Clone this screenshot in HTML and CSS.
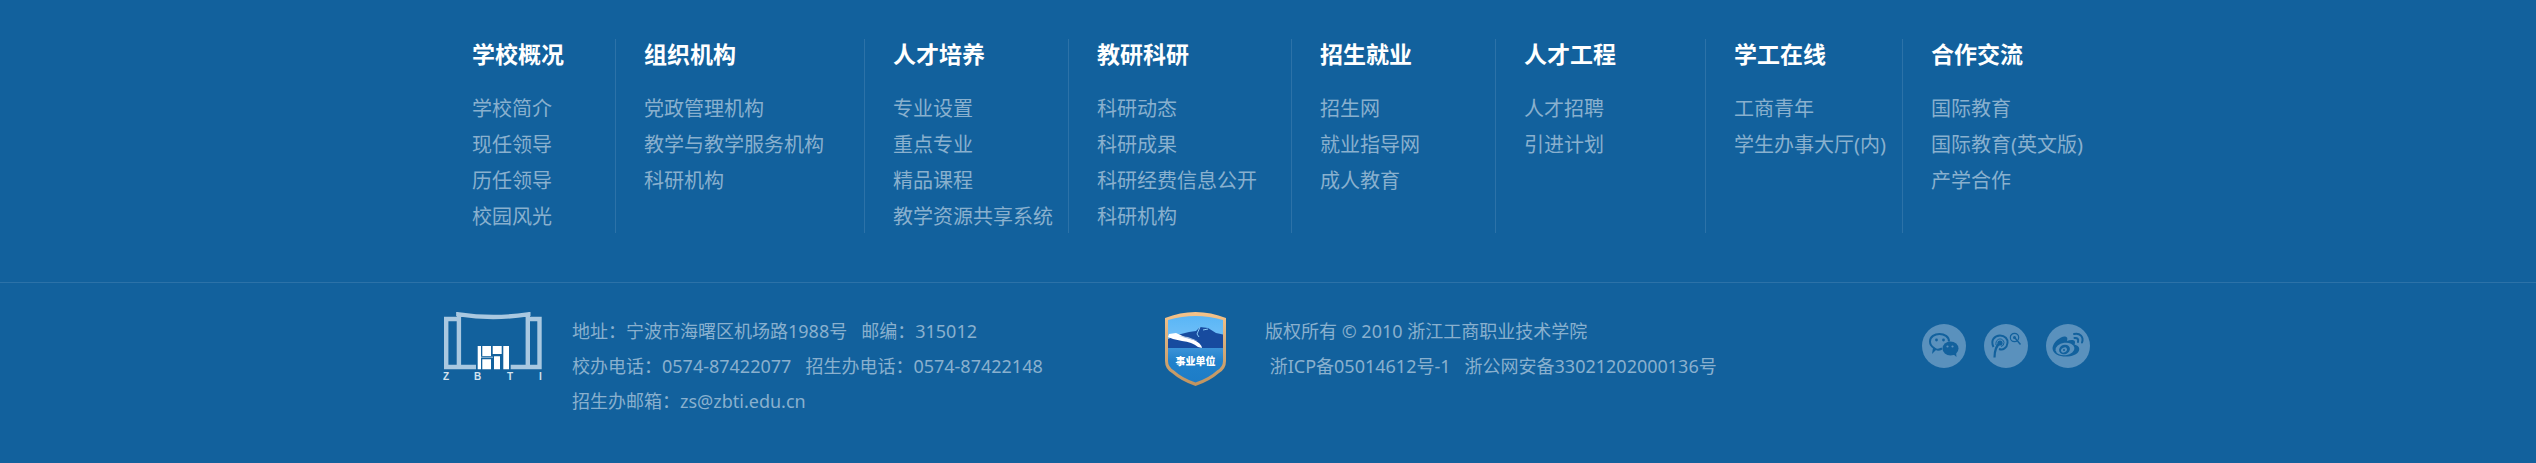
FILE: index.html
```html
<!DOCTYPE html>
<html lang="zh-CN">
<head>
<meta charset="utf-8">
<meta name="viewport" content="width=device-width, initial-scale=1">
<title>浙江工商职业技术学院</title>
<link rel="stylesheet" href="styles.css">
</head>
<body>
<footer class="footer">
  <nav class="sitemap container" aria-label="网站导航">
    <section class="col">
      <h2>学校概况</h2>
      <ul><li><a href="#">学校简介</a></li><li><a href="#">现任领导</a></li><li><a href="#">历任领导</a></li><li><a href="#">校园风光</a></li></ul>
    </section>
    <section class="col">
      <h2>组织机构</h2>
      <ul><li><a href="#">党政管理机构</a></li><li><a href="#">教学与教学服务机构</a></li><li><a href="#">科研机构</a></li></ul>
    </section>
    <section class="col">
      <h2>人才培养</h2>
      <ul><li><a href="#">专业设置</a></li><li><a href="#">重点专业</a></li><li><a href="#">精品课程</a></li><li><a href="#">教学资源共享系统</a></li></ul>
    </section>
    <section class="col">
      <h2>教研科研</h2>
      <ul><li><a href="#">科研动态</a></li><li><a href="#">科研成果</a></li><li><a href="#">科研经费信息公开</a></li><li><a href="#">科研机构</a></li></ul>
    </section>
    <section class="col">
      <h2>招生就业</h2>
      <ul><li><a href="#">招生网</a></li><li><a href="#">就业指导网</a></li><li><a href="#">成人教育</a></li></ul>
    </section>
    <section class="col">
      <h2>人才工程</h2>
      <ul><li><a href="#">人才招聘</a></li><li><a href="#">引进计划</a></li></ul>
    </section>
    <section class="col">
      <h2>学工在线</h2>
      <ul><li><a href="#">工商青年</a></li><li><a href="#">学生办事大厅(内)</a></li></ul>
    </section>
    <section class="col">
      <h2>合作交流</h2>
      <ul><li><a href="#">国际教育</a></li><li><a href="#">国际教育(英文版)</a></li><li><a href="#">产学合作</a></li></ul>
    </section>
  </nav>

  <div class="bottom">
    <div class="bottom-row container">
      <div class="contact">
        <svg class="logo" viewBox="0 0 99 69" role="img" aria-label="ZBTI">
          <g fill="none" stroke="#a9c8e0" stroke-width="4.4">
            <path d="M14 7H3.2V55H33"/>
            <path d="M15.9 55V2.4Q50 7.6 84.8 2.4V55"/>
            <path d="M87 7H96.500V55H67.700"/>
            <path d="M13.700 0V4M87 0V4" stroke-width="1"/>
          </g>
          <g fill="#fff">
            <path d="M34.700 34H38V57.300H34.700zM39.300 34H48V44H39.300zM39.300 47.300H48V57.300H39.300zM49.700 34H58.700V42H49.700zM51 44.300H57V57.300H51zM60.300 34H66V57.300H60.300z"/>
            <path d="M38 45.200H50" stroke="#a9c8e0"/>
          </g>
          <g class="logo-letters"><text x="0" y="68">Z</text><text x="31" y="68">B</text><text x="64" y="68">T</text><text x="96" y="68">I</text></g>
        </svg>
        <address class="info">
          <p>地址：宁波市海曙区机场路1988号 &nbsp; 邮编：315012</p>
          <p>校办电话：0574-87422077 &nbsp; 招生办电话：0574-87422148</p>
          <p>招生办邮箱：zs@zbti.edu.cn</p>
        </address>
      </div>
      <div class="legal">
        <svg class="badge" viewBox="0 0 61 74" role="img" aria-label="事业单位">
          <defs>
            <linearGradient id="sky" x2="0" y2="1"><stop offset="0" stop-color="#55b4f6"/><stop offset="1" stop-color="#7cc4f8"/></linearGradient>
            <linearGradient id="sea" x2="0" y2="1"><stop offset="0" stop-color="#3b93d8"/><stop offset=".35" stop-color="#2081cb"/><stop offset="1" stop-color="#1c7bc6"/></linearGradient>
            <linearGradient id="rim" x2="0" y2="1"><stop offset="0" stop-color="#f5c389"/><stop offset=".4" stop-color="#d9af7c"/><stop offset="1" stop-color="#c0935f"/></linearGradient>
          </defs>
          <path fill="url(#rim)" d="M0 6Q15 0 30.500 0Q46 0 61 6V49Q61 57 54 61Q45 69 30.500 74Q16 69 7 61Q0 57 0 49z"/>
          <clipPath id="shield"><path d="M3 8Q17 4 30.500 4Q44 4 58 8V49Q58 55 52 58.500Q44 66 30.500 70.500Q17 66 9 58.500Q3 55 3 49z"/></clipPath>
          <g clip-path="url(#shield)">
            <path fill="url(#sky)" d="M0 0H61V38H0z"/>
            <path fill="#174b9f" d="M0 28L16 22L24 20L31 19L35 15L43 16L51 21L61 23V37H0z"/>
            <path fill="none" stroke="#8ccbf7" d="M35 15L32 22L34 25M38 18L43 17"/>
            <path fill="#fff" d="M4 22L11 21L20 25L29 28Q36 31 37 36L33 35Q27 30 17 29L8 27L3 25z"/>
            <path fill="#a7bfe0" d="M14 24L23 25L33 29L28 28z"/>
            <path fill="url(#sea)" d="M0 36H61V74H0z"/>
          </g>
          <text class="badge-text" x="30.500" y="53" text-anchor="middle">事业单位</text>
        </svg>
        <div class="info">
          <p>版权所有 © 2010 浙江工商职业技术学院</p>
          <p>&nbsp;<a href="#">浙ICP备05014612号-1</a> &nbsp; <a href="#">浙公网安备33021202000136号</a></p>
        </div>
      </div>
      <div class="social">
        <a href="#" aria-label="微信">
          <svg viewBox="0 0 44 44">
            <path fill="none" stroke="#12619d" stroke-width="2" d="M20 24.500Q16 26.500 13.500 25L11.500 27L12 24Q8 21.500 8 17.500C8 7.500 27 7.500 27 17.500"/>
            <ellipse cx="28.500" cy="24.500" rx="8" ry="7" fill="#12619d"/><path fill="#12619d" d="M31 30L34.500 33L34 28z"/>
            <circle cx="14.500" cy="16" r="1.400" fill="#12619d"/><circle cx="21.500" cy="16" r="1.400" fill="#12619d"/>
            <circle cx="25.500" cy="22.500" r="1.100" fill="#5a91bd"/><circle cx="30.500" cy="22.500" r="1.100" fill="#5a91bd"/>
          </svg>
        </a>
        <a href="#" aria-label="校园平台">
          <svg viewBox="0 0 44 44" fill="none" stroke="#12619d">
            <path stroke-width="2" d="M9.500 23C6 16 11 11.500 16 11.500C21 11.500 24 15 23.500 19C23 24 19 26.500 15 25"/>
            <path stroke-width="2.200" d="M16 19C12 22 10.500 27 10.500 33.500"/>
            <circle cx="16" cy="19" r="2.600" fill="#12619d" stroke="none"/><path d="M12 21C11 14 19 13 20 18.500Q20 22 17 22.500"/>
            <circle cx="30.500" cy="13.500" r="4.200" stroke-width="1.200"/><circle cx="30.500" cy="13.500" r="1.500" fill="#12619d" stroke="none"/><path stroke-width="1.400" d="M31 14L36.500 20.500"/>
          </svg>
        </a>
        <a href="#" aria-label="微博">
          <svg viewBox="0 0 44 44">
            <path fill="#12619d" d="M6.500 24C7 18 15 12 19 12.500C22 13 21.500 15 21 17C24 15.500 29 15.500 29 18Q29 19.500 28.500 20.500C32 21.500 34 23.500 33 26.500C30 35 6.500 35 6.500 24z"/>
            <ellipse cx="19" cy="25" rx="9.500" ry="6.200" fill="#5a91bd" transform="rotate(-8 19 25)"/>
            <ellipse cx="18.500" cy="25.500" rx="5.500" ry="4.700" fill="#12619d" transform="rotate(-20 18.500 25.500)"/>
            <ellipse cx="18" cy="26" rx="3.200" ry="2.200" fill="#5a91bd" transform="rotate(-30 18 26)"/><circle cx="18" cy="26" r="1" fill="#12619d"/>
            <path fill="none" stroke="#12619d" stroke-width="2" stroke-linecap="round" d="M28 10C34 8.500 38 13 36 18.500M28.500 14Q33 13.500 32 18"/>
          </svg>
        </a>
      </div>
    </div>
  </div>
</footer>
</body>
</html>
```
FILE: styles.css
```css
* {
  box-sizing: border-box;
}

body {
  margin: 0;
  background: #12619d;
  color: #89b0ce;
  font-family: "Noto Sans", "Noto Sans CJK SC", sans-serif;
}

h2, p, ul {
  margin: 0;
  padding: 0;
}

ul {
  list-style: none;
}

a {
  color: inherit;
  text-decoration: none;
}

a:hover {
  color: #fff;
}

.container {
  max-width: 1650px;
  margin: 0 auto;
}

.sitemap {
  display: grid;
  grid-template-columns: 172fr 249fr 204fr 223fr 204fr 210fr 197fr 191fr;
  padding: 39px 0 49px;
}

.col {
  padding-left: 29px;
  white-space: nowrap;
}

.col + .col {
  padding-left: 28px;
  border-left: 1px solid #2c72a8;
}

.col h2 {
  margin-bottom: 24px;
  color: #fff;
  font-size: 23px;
  line-height: 30px;
  font-weight: 700;
}

.col ul {
  display: grid;
  gap: 4px;
}

.col li {
  font-size: 20px;
  line-height: 32px;
}

.bottom {
  border-top: 1px solid #2c72a8;
  padding: 29px 0 44px;
}

.bottom-row {
  display: grid;
  grid-template-columns: 722fr 757fr 171fr;
}

.contact, .legal {
  display: flex;
  align-items: flex-start;
}

.contact {
  gap: 30px;
}

.legal {
  gap: 39px;
}

.logo {
  flex: none;
  width: 99px;
  height: 69px;
}

.logo-letters {
  fill: #d3e3ef;
  font: 700 10px "Liberation Sans", sans-serif;
}

.badge {
  flex: none;
  width: 61px;
  height: 74px;
}

.badge-text {
  fill: #fff;
  font: 900 10px "Noto Sans CJK SC", sans-serif;
}

.info {
  padding-top: 2px;
  font-size: 18px;
  line-height: 35px;
  font-style: normal;
  white-space: nowrap;
}

.social {
  display: flex;
  gap: 18px;
  padding-top: 12px;
}

.social a {
  width: 44px;
  height: 44px;
  border-radius: 50%;
  background: #5a91bd;
}

.social svg {
  display: block;
}
```
